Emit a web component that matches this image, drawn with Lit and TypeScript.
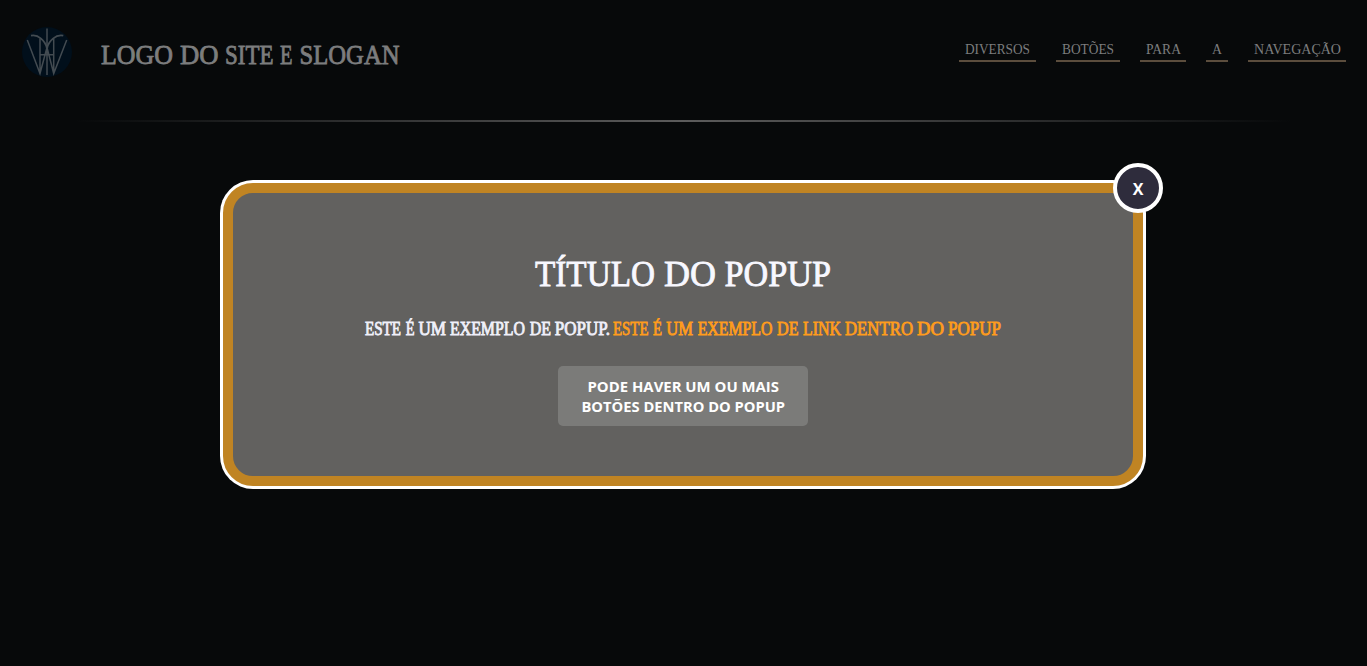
import { LitElement, html, svg, css } from "lit";
import { customElement } from "lit/decorators.js";

type Word = [text: string, start: number, end: number];

const LOGO: Word[] = [["LOGO", 1, 73], ["DO", 80, 118.5], ["SITE", 125, 173.5], ["E", 180, 192.5], ["SLOGAN", 199.5, 299.5]];
const TITLE: Word[] = [["TÍTULO", 0, 120], ["DO", 129, 181], ["POPUP", 189.5, 296]];
const TEXT: Word[] = [["ESTE", 0, 36], ["É", 40.7, 49.5], ["UM", 53.5, 81], ["EXEMPLO", 85, 160], ["DE", 164.7, 186], ["POPUP.", 189.7, 245]];
const LINK: Word[] = [["ESTE", 248, 283.5], ["É", 288, 297], ["UM", 301.3, 328], ["EXEMPLO", 332.7, 407.5], ["DE", 412, 433.5], ["LINK", 438, 476], ["DENTRO", 480, 548], ["DO", 552, 579], ["POPUP", 583, 636]];
const NAV: [string, number, number][] = [["DIVERSOS", 77, 65], ["BOTÕES", 64, 52], ["PARA", 46, 35], ["A", 22, 10], ["NAVEGAÇÃO", 98, 87]];

const words = (list: Word[], y: number) =>
  svg`<text y=${y}>${list.map(([t, a, b]) => svg`<tspan x=${a} textLength=${b - a} lengthAdjust="spacingAndGlyphs">${t}</tspan>`)}</text>`;

@customElement("app-root")
export class AppRoot extends LitElement {
  static styles = css`
    :host { display: block; height: 666px; overflow: hidden; background: #07090a; font-family: "Liberation Serif", serif; }
    * { box-sizing: border-box; }
    svg { display: block; overflow: visible; }
    .page { position: relative; height: 666px; }
    header { display: flex; height: 120px; padding: 27px 21px 0 22px; align-items: flex-start; }
    .emblem { width: 50px; height: 50px; flex: none; }
    .brand { margin: 9px 0 0 28px; font-size: 27px; fill: #7c7d7e; stroke: #7c7d7e; stroke-width: 0.8px; }
    nav { display: flex; gap: 20px; margin: 13px 0 0 auto; }
    nav a { display: block; height: 22px; padding-left: 6px; border-bottom: 2px solid #5b4d3d; font-size: 15px; fill: #7c7d7e; }
    .rule { height: 2px; margin: 0 75px; background: linear-gradient(90deg, transparent, #5c5c5c, transparent); }
    .popup { position: absolute; left: 223px; top: 183px; width: 920px; height: 303px; border: 10px solid #c08423; border-radius: 30px;
      box-shadow: 0 0 0 3px #fff; background: #62615f; display: flex; flex-direction: column; align-items: center; padding-top: 62px; }
    .title { font-size: 36px; fill: #f8f8ff; stroke: #f8f8ff; stroke-width: 0.8px; }
    .text { margin-top: 24px; font-size: 18px; fill: #f0f0fa; stroke: #f0f0fa; stroke-width: 0.8px; }
    .link { fill: #ff9c1c; stroke: #ff9c1c; }
    .action { width: 250px; height: 60px; margin-top: 27px; border: 0; border-radius: 5px; background: #7b7b79; fill: #fff; padding: 0;
      font: bold 15px "Open Sans", "Noto Sans", sans-serif; }
    .close { position: absolute; right: -30px; top: -30px; width: 50px; height: 50px; padding: 0; border: 4px solid #fff; border-radius: 50%;
      background: #2e2c3c; color: #fff; font: bold 16px/44px "Open Sans", sans-serif; }
  `;

  render() {
    return html`<div class="page">
      <header>
        <svg class="emblem" viewBox="0 0 50 50">
          <circle cx="25" cy="25" r="25" fill="#010f1b" />
          <g fill="none" stroke="#434b51" stroke-width="1.5">
            <path d="M5.300 13L18 46.500L25 20.500L31.700 46.500L44.700 13M18 11.500V47M31.700 11.500V47M25 1.500V48M18 27.700H31.700" />
            <path d="M9 8.700C16 7 23.500 14 25 21.500C26.500 14 34 7 41.300 8.700" stroke-width="1.8" />
          </g>
        </svg>
        <svg class="brand" width="300" height="36">${words(LOGO, 27.5)}</svg>
        <nav>${NAV.map(([t, w, len]) => html`<a style="width:${w}px"><svg width=${len} height="20">${words([[t, 0, len]], 14)}</svg></a>`)}</nav>
      </header>
      <div class="rule"></div>
      <section class="popup">
        <button class="close">X</button>
        <svg class="title" width="296" height="40">${words(TITLE, 31)}</svg>
        <svg class="text" width="636" height="20">${words(TEXT, 15.5)}<g class="link">${words(LINK, 15.5)}</g></svg>
        <button class="action"><svg width="250" height="60">${words([["PODE HAVER UM OU MAIS", 29.5, 221]], 25.5)}${words([["BOTÕES DENTRO DO POPUP", 23.5, 227]], 45.5)}</svg></button>
      </section>
    </div>`;
  }
}
